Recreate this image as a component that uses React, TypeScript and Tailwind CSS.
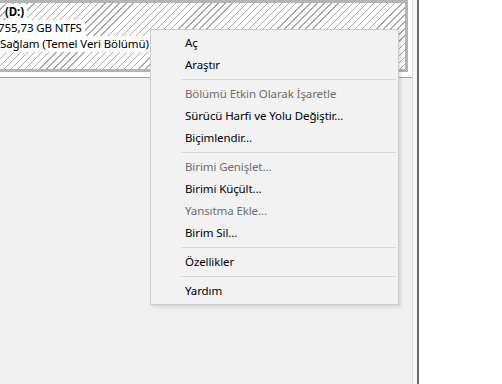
type Item = { label: string; disabled?: boolean } | "sep";

const items: Item[] = [
  { label: "Aç" },
  { label: "Araştır" },
  "sep",
  { label: "Bölümü Etkin Olarak İşaretle", disabled: true },
  { label: "Sürücü Harfi ve Yolu Değiştir..." },
  { label: "Biçimlendir..." },
  "sep",
  { label: "Birimi Genişlet...", disabled: true },
  { label: "Birimi Küçült..." },
  { label: "Yansıtma Ekle...", disabled: true },
  { label: "Birim Sil..." },
  "sep",
  { label: "Özellikler" },
  "sep",
  { label: "Yardım" },
];

function ContextMenu() {
  return (
    <div className="absolute left-[150px] top-[29px] w-[249px] border border-[#cccccc] bg-[#f2f2f2] py-[2px] shadow-[2px_2px_3px_rgba(0,0,0,0.12)]">
      {items.map((it, i) =>
        it === "sep" ? (
          <div key={i} className="flex h-[7px] items-center pl-[30px] pr-[2px]">
            <div className="h-px w-full bg-[#d7d7d7]" />
          </div>
        ) : (
          <div
            key={i}
            className={
              "flex h-[22px] items-center pl-[34px] " +
              (it.disabled ? "text-[#6d6d6d]" : "text-black")
            }
          >
            {it.label}
          </div>
        )
      )}
    </div>
  );
}

export default function App() {
  return (
    <div className="flex h-[384px] w-[502px] overflow-hidden bg-white font-['Noto_Sans',sans-serif] text-[11.5px] leading-[16px] tracking-[-0.1px] text-black">
      <div className="relative w-[413px] shrink-0 border-r border-[#dadada] bg-[#f0f0f0]">
        <div className="h-[78px] border-b border-[#a0a0a0] bg-white pb-[5px] pr-[4px]">
          <div className="h-full border-b-[3px] border-r-[3px] border-t-[3px] border-[#b4b4b4] bg-[repeating-linear-gradient(135deg,#ffffff_0px,#ffffff_4px,#a8a8a8_4px,#a8a8a8_5px)] pt-px">
            <div className="flex flex-col items-start">
              <span className="ml-[5px] bg-white pr-[3px] font-bold">(D:)</span>
              <span className="-ml-[2px] bg-white pr-[3px]">755,73 GB NTFS</span>
              <span className="bg-white pr-[3px]">Sağlam (Temel Veri Bölümü)</span>
            </div>
          </div>
        </div>
        <ContextMenu />
      </div>
      <div className="w-[4px] shrink-0 bg-[#f7f7f7]" />
      <div className="w-[2px] shrink-0 bg-[#6d6d6d]" />
      <div className="flex-1 bg-white" />
    </div>
  );
}
